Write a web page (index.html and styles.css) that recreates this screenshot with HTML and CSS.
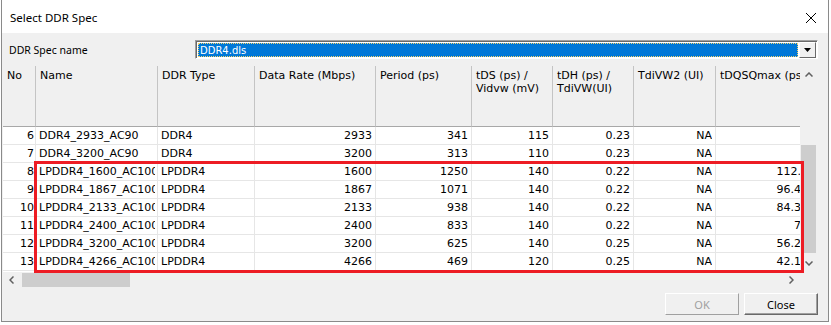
FILE: index.html
```html
<!DOCTYPE html>
<html lang="en">

<head>
    <meta charset="UTF-8">
    <title>Select DDR Spec</title>
    <link rel="stylesheet" href="styles.css">
</head>

<body>
    <div class="window">
        <div class="titlebar">
            <span class="title">Select DDR Spec</span>
            <svg class="close-x" width="12" height="12" viewBox="0 0 12 12">
                <path d="M1 1 L11 11 M11 1 L1 11" stroke="#000" stroke-width="1" fill="none"/>
            </svg>
        </div>

        <div class="content">
            <div class="spec-row">
                <span class="spec-label">DDR Spec name</span>
                <div class="combo">
                    <div class="combo-value"><span class="combo-text">DDR4.dls</span></div>
                    <div class="combo-btn">
                        <svg width="9" height="5" viewBox="0 0 9 5"><path d="M1 0 L8 0 L4.5 4 Z" fill="#000"/></svg>
                    </div>
                </div>
            </div>

            <div class="grid">
                <div class="viewport">
                    <div class="row head">
                        <div class="cell">No</div>
                        <div class="cell">Name</div>
                        <div class="cell">DDR Type</div>
                        <div class="cell">Data Rate (Mbps)</div>
                        <div class="cell">Period (ps)</div>
                        <div class="cell">tDS (ps) /<br>Vidvw (mV)</div>
                        <div class="cell">tDH (ps) /<br>TdiVW(UI)</div>
                        <div class="cell">TdiVW2 (UI)</div>
                        <div class="cell">tDQSQmax (ps)</div>
                    </div>
                    <div id="rows"></div>
                </div>

                <div class="vscroll">
                    <div class="arrow">
                        <svg width="8" height="5" viewBox="0 0 8 5"><path d="M0.5 4.5 L4 1 L7.5 4.5" stroke="#606060" stroke-width="1.5" fill="none"/></svg>
                    </div>
                    <div class="vtrack"><div class="vthumb"></div></div>
                    <div class="arrow">
                        <svg width="8" height="5" viewBox="0 0 8 5"><path d="M0.5 0.5 L4 4 L7.5 0.5" stroke="#606060" stroke-width="1.5" fill="none"/></svg>
                    </div>
                </div>

                <div class="hscroll">
                    <div class="arrow">
                        <svg width="5" height="8" viewBox="0 0 5 8"><path d="M4.5 0.5 L1 4 L4.5 7.5" stroke="#606060" stroke-width="1.5" fill="none"/></svg>
                    </div>
                    <div class="htrack"><div class="hthumb"></div></div>
                    <div class="arrow">
                        <svg width="5" height="8" viewBox="0 0 5 8"><path d="M0.5 0.5 L4 4 L0.5 7.5" stroke="#606060" stroke-width="1.5" fill="none"/></svg>
                    </div>
                </div>
                <div class="corner"></div>

                <div class="mark"></div>
            </div>

            <div class="buttons">
                <button class="btn" disabled>OK</button>
                <button class="btn">Close</button>
            </div>
        </div>
    </div>

    <script>
        const specs = [
            [6, 'DDR4_2933_AC90', 'DDR4', 2933, 341, 115, '0.23', 'NA', ''],
            [7, 'DDR4_3200_AC90', 'DDR4', 3200, 313, 110, '0.23', 'NA', ''],
            [8, 'LPDDR4_1600_AC100', 'LPDDR4', 1600, 1250, 140, '0.22', 'NA', '112.5'],
            [9, 'LPDDR4_1867_AC100', 'LPDDR4', 1867, 1071, 140, '0.22', 'NA', '96.43'],
            [10, 'LPDDR4_2133_AC100', 'LPDDR4', 2133, 938, 140, '0.22', 'NA', '84.38'],
            [11, 'LPDDR4_2400_AC100', 'LPDDR4', 2400, 833, 140, '0.22', 'NA', '75'],
            [12, 'LPDDR4_3200_AC100', 'LPDDR4', 3200, 625, 140, '0.25', 'NA', '56.25'],
            [13, 'LPDDR4_4266_AC100', 'LPDDR4', 4266, 469, 120, '0.25', 'NA', '42.19']
        ];

        const rows = document.getElementById('rows');
        for (const spec of specs) {
            const row = document.createElement('div');
            row.className = 'row';
            spec.forEach((value, i) => {
                const cell = document.createElement('div');
                cell.className = (i === 1 || i === 2) ? 'cell text' : 'cell num';
                const span = document.createElement('span');
                span.className = 'txt';
                span.textContent = value;
                cell.appendChild(span);
                row.appendChild(cell);
            });
            rows.appendChild(row);
        }
    </script>
</body>

</html>
```

FILE: styles.css
```css
body {
    margin: 0;
    padding: 0;
    background-color: #ffffff;
}

.window {
    box-sizing: border-box;
    width: 828px;
    height: 322px;
    margin-left: 1px;
    border: 1px solid #8a8a8a;
    border-top: none;
    display: flex;
    flex-direction: column;
}

.titlebar {
    height: 33px;
    background: white;
    display: flex;
    align-items: center;
    justify-content: space-between;
    padding: 2px 11px 0 8px;
    box-sizing: border-box;
}

.title {
    font-family: "Noto Sans", sans-serif;
    font-size: 11.5px;
    color: #000;
}

.content {
    flex: 1;
    background-color: #f0f0f0;
    padding: 7px 10px 0 1px;
}

.spec-row {
    display: flex;
    align-items: center;
    height: 19px;
}

.spec-label {
    font-family: "Noto Sans", sans-serif;
    font-size: 10.5px;
    margin-left: 6px;
    width: 186px;
}

.combo {
    flex: 1;
    height: 19px;
    box-sizing: border-box;
    display: flex;
    background: white;
    border: 1px solid;
    border-color: #a0a0a0 #ffffff #ffffff #a0a0a0;
    box-shadow: inset 1px 1px 0 #696969;
    padding: 2px 1px 1px 2px;
}

.combo-value {
    flex: 1;
    background-color: #0078d7;
    box-sizing: border-box;
    border: 1px dotted #f6d36b;
    display: flex;
    align-items: center;
}

.combo-text {
    font-family: "DejaVu Sans", sans-serif;
    font-size: 10px;
    color: white;
    padding-left: 1px;
}

.combo-btn {
    width: 17px;
    margin: -1px 0 -1px 1px;
    box-sizing: border-box;
    background: #f0f0f0;
    border: 1px solid;
    border-color: #ffffff #696969 #696969 #ffffff;
    display: flex;
    align-items: center;
    justify-content: center;
}

.grid {
    position: relative;
    margin-top: 7px;
    display: grid;
    grid-template-columns: 797px 17px;
    grid-template-rows: 206px 16px;
    font-family: "DejaVu Sans", sans-serif;
    font-size: 11px;
    color: #000;
}

.viewport {
    overflow: hidden;
    background: white;
}

.row {
    display: grid;
    grid-template-columns: 33px 122px 97px 121px 96px 81px 81px 82px 96px;
    height: 18px;
    line-height: 17px;
}

.cell {
    box-sizing: border-box;
    border-right: 1px solid #e6e6e6;
    border-bottom: 1px solid #e6e6e6;
    padding: 0 3px;
    white-space: nowrap;
    overflow: hidden;
}

.txt {
    display: block;
    overflow: hidden;
    white-space: nowrap;
}

.text {
    padding-right: 2px;
}

.num {
    text-align: right;
}

.row .cell:first-child {
    padding-right: 1px;
}

.head {
    height: 61px;
    line-height: 13px;
    background: #f0f0f0;
}

.head .cell {
    padding: 3px 4px;
    border-right: 1px solid #c4c4c4;
    border-bottom: 1px solid #a8a8a8;
}

.vscroll {
    background: #f0f0f0;
    display: flex;
    flex-direction: column;
}

.vscroll .arrow {
    height: 17px;
    display: flex;
    align-items: center;
    justify-content: center;
}

.vtrack {
    flex: 1;
}

.vthumb {
    margin: 62px 1px 0 1px;
    height: 108px;
    background: #cdcdcd;
}

.hscroll {
    background: #f0f0f0;
    display: flex;
}

.hscroll .arrow {
    width: 17px;
    display: flex;
    align-items: center;
    justify-content: center;
}

.htrack {
    flex: 1;
    padding: 1px 0;
}

.hthumb {
    margin-left: 2px;
    width: 108px;
    height: 14px;
    background: #cdcdcd;
}

.corner {
    background: #f0f0f0;
}

.mark {
    position: absolute;
    left: 31px;
    top: 95px;
    width: 770px;
    height: 112px;
    box-sizing: border-box;
    border: 3px solid #ed1c24;
    pointer-events: none;
}

.buttons {
    display: flex;
    justify-content: flex-end;
    gap: 5px;
    margin-top: 5px;
}

.btn {
    width: 74px;
    height: 22px;
    font-family: "Noto Sans", sans-serif;
    font-size: 11px;
    color: #000;
    background: #f0f0f0;
    border: 1px solid;
    border-color: #ffffff #696969 #696969 #ffffff;
    box-shadow: inset -1px -1px 0 #a0a0a0;
    padding: 0;
}

.btn:disabled {
    color: #a0a0a0;
    border-color: #ffffff #a0a0a0 #a0a0a0 #ffffff;
    box-shadow: none;
}
```
